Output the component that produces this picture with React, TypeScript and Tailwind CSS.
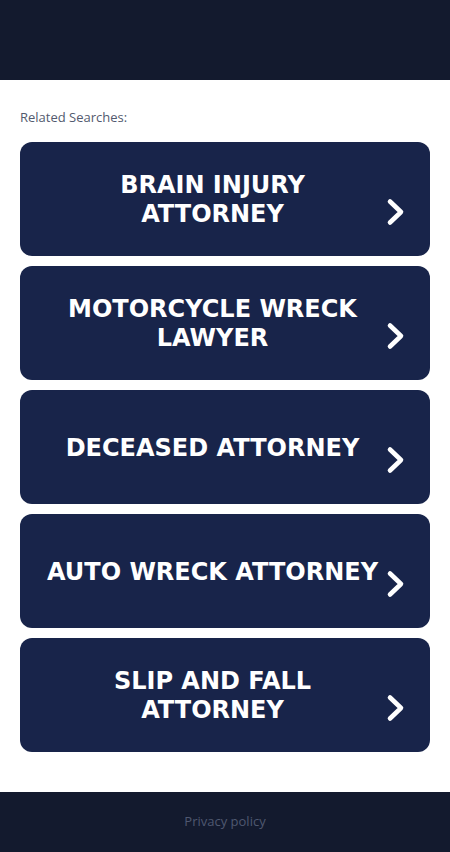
import React from "react";

const items = [
  ["BRAIN INJURY", "ATTORNEY"],
  ["MOTORCYCLE WRECK", "LAWYER"],
  ["DECEASED ATTORNEY"],
  ["AUTO WRECK ATTORNEY"],
  ["SLIP AND FALL", "ATTORNEY"],
];

export default function App() {
  return (
    <div className="min-h-[852px] w-full flex flex-col bg-white">
      <div className="h-[80px] bg-[#131a2e]" />
      <div className="px-5 pt-[29px] pb-[40px]">
        <div
          className="text-[13px] leading-[17px] font-medium text-[#525a6e] mb-[16px]"
          style={{ fontFamily: '"Open Sans", sans-serif' }}
        >
          Related Searches:
        </div>
        <div className="flex flex-col gap-[10px]">
          {items.map((lines, i) => (
            <a
              key={i}
              href="#"
              className="h-[114px] rounded-[12px] bg-[#18244a] flex items-center pl-[19px] pr-[24px]"
            >
              <div
                className="flex-1 text-center text-white font-bold text-[24px] leading-[29px] pt-[2px]"
                style={{ fontFamily: '"DejaVu Sans", sans-serif' }}
              >
                {lines.map((l, j) => (
                  <div key={j}>{l}</div>
                ))}
              </div>
              <svg
                width="20"
                height="28"
                viewBox="0 0 20 28"
                className="shrink-0 mt-[25px]"
              >
                <polyline
                  points="4,3.5 15,14 4,24.5"
                  fill="none"
                  stroke="white"
                  strokeWidth="4.6"
                  strokeLinecap="round"
                  strokeLinejoin="round"
                />
              </svg>
            </a>
          ))}
        </div>
      </div>
      <div className="h-[60px] bg-[#131a2e] flex items-center justify-center mt-auto">
        <span
          className="text-[13px] text-[#4f5870]"
          style={{ fontFamily: '"Open Sans", sans-serif' }}
        >
          Privacy policy
        </span>
      </div>
    </div>
  );
}
